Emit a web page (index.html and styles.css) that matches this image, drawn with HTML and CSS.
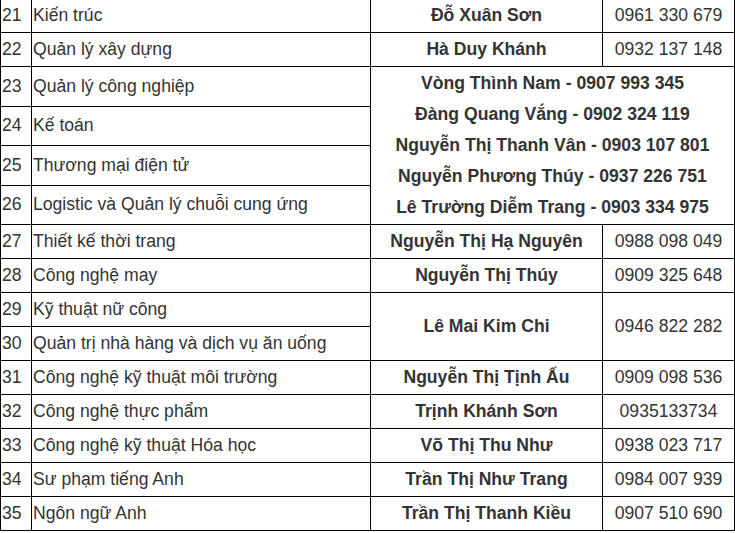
FILE: index.html
```html
<!DOCTYPE html>
<html lang="vi">
<head>
<meta charset="utf-8">
<link rel="stylesheet" href="styles.css">
</head>
<body>
<table class="list">
<colgroup>
<col class="c-no"><col class="c-major"><col class="c-name"><col class="c-phone">
</colgroup>
<tbody>
<tr><td>21</td><td>Kiến trúc</td><td class="name">Đỗ Xuân Sơn</td><td class="phone">0961 330 679</td></tr>
<tr><td>22</td><td>Quản lý xây dựng</td><td class="name">Hà Duy Khánh</td><td class="phone">0932 137 148</td></tr>
<tr><td>23</td><td>Quản lý công nghiệp</td><td class="name" colspan="2" rowspan="4">Vòng Thình Nam - 0907 993 345<br>Đàng Quang Vắng - 0902 324 119<br>Nguyễn Thị Thanh Vân - 0903 107 801<br>Nguyễn Phương Thúy - 0937 226 751<br>Lê Trường Diễm Trang - 0903 334 975</td></tr>
<tr><td>24</td><td>Kế toán</td></tr>
<tr><td>25</td><td>Thương mại điện tử</td></tr>
<tr><td>26</td><td>Logistic và Quản lý chuỗi cung ứng</td></tr>
<tr><td>27</td><td>Thiết kế thời trang</td><td class="name">Nguyễn Thị Hạ Nguyên</td><td class="phone">0988 098 049</td></tr>
<tr><td>28</td><td>Công nghệ may</td><td class="name">Nguyễn Thị Thúy</td><td class="phone">0909 325 648</td></tr>
<tr><td>29</td><td>Kỹ thuật nữ công</td><td class="name" rowspan="2">Lê Mai Kim Chi</td><td class="phone" rowspan="2">0946 822 282</td></tr>
<tr><td>30</td><td>Quản trị nhà hàng và dịch vụ ăn uống</td></tr>
<tr><td>31</td><td>Công nghệ kỹ thuật môi trường</td><td class="name">Nguyễn Thị Tịnh Ấu</td><td class="phone">0909 098 536</td></tr>
<tr><td>32</td><td>Công nghệ thực phẩm</td><td class="name">Trịnh Khánh Sơn</td><td class="phone">0935133734</td></tr>
<tr><td>33</td><td>Công nghệ kỹ thuật Hóa học</td><td class="name">Võ Thị Thu Như</td><td class="phone">0938 023 717</td></tr>
<tr><td>34</td><td>Sư phạm tiếng Anh</td><td class="name">Trần Thị Như Trang</td><td class="phone">0984 007 939</td></tr>
<tr><td>35</td><td>Ngôn ngữ Anh</td><td class="name">Trần Thị Thanh Kiều</td><td class="phone">0907 510 690</td></tr>
</tbody>
</table>
</body>
</html>
```
FILE: styles.css
```css
html, body {
  margin: 0;
  padding: 0;
  background: #fff;
}
body {
  font-family: "Liberation Sans", Arial, sans-serif;
  font-size: 17.6px;
  color: #333;
}
.list {
  border-collapse: collapse;
  table-layout: fixed;
  width: 734px;
  margin-top: -2px;
}
.c-no { width: 31px; }
.c-major { width: 339px; }
.c-name { width: 232px; }
.c-phone { width: 132px; }
.list td {
  border: 1px solid #000;
  padding: 1px 1px;
  line-height: 31px;
  vertical-align: middle;
  white-space: nowrap;
}
.list td.name {
  font-weight: bold;
  text-align: center;
}
.list td.phone {
  text-align: center;
}
```
